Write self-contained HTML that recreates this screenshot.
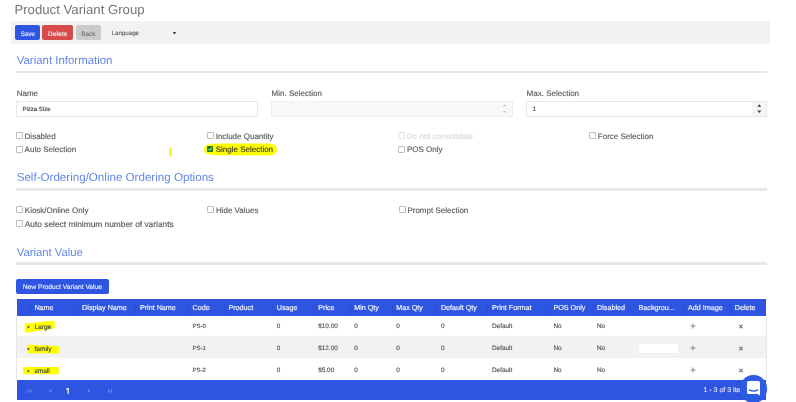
<!DOCTYPE html>
<html><head><meta charset="utf-8"><style>
html,body{margin:0;padding:0;}
body{filter:blur(0.42px);background:#fff;width:796px;height:402px;overflow:hidden;position:relative;}
.t{position:absolute;white-space:nowrap;line-height:1;text-rendering:geometricPrecision;-webkit-text-stroke:0.15px currentColor;font-family:"Liberation Sans", sans-serif;}
.b{position:absolute;}
</style></head><body>
<div class="t" style="left:14.4px;top:2.63px;font-size:13.2px;color:#757575;font-weight:normal;-webkit-text-stroke:0;">Product Variant Group</div>
<div class="b" style="left:11px;top:21.2px;width:759.00px;height:23.10px;background:#f2f2f2;"></div>
<div class="b" style="left:14.9px;top:25.1px;width:25.30px;height:15.00px;background:#2d55e1;border-radius:2px;"></div>
<div class="t" style="left:20.7px;top:31.67px;font-size:6.3px;color:#dfe6ff;font-weight:normal;">Save</div>
<div class="b" style="left:42.3px;top:25.1px;width:30.90px;height:15.00px;background:#d64b4b;border-radius:2px;"></div>
<div class="t" style="left:48.1px;top:31.61px;font-size:6.6px;color:#fbe3e3;font-weight:normal;">Delete</div>
<div class="b" style="left:75.5px;top:25.1px;width:25.50px;height:15.00px;background:#cacbcd;border-radius:2px;"></div>
<div class="t" style="left:81.3px;top:31.78px;font-size:6.4px;color:#7a7a7a;font-weight:normal;">Back</div>
<div class="t" style="left:111.5px;top:30.95px;font-size:6.2px;color:#666;font-weight:normal;">Language</div>
<div class="b" style="left:172.6px;top:32px;width:3.80px;height:2.60px;background:#444;clip-path:polygon(0 0,100% 0,50% 100%);"></div>
<div class="t" style="left:16.7px;top:55.51px;font-size:11.45px;color:#6286e6;font-weight:normal;-webkit-text-stroke:0;">Variant Information</div>
<div class="b" style="left:16.2px;top:70.5px;width:750.80px;height:2.50px;background:#e8e8e8;"></div>
<div class="t" style="left:16.7px;top:90.43px;font-size:8px;color:#5a5a5a;font-weight:normal;">Name</div>
<div class="t" style="left:271.6px;top:90.43px;font-size:8px;color:#5a5a5a;font-weight:normal;">Min. Selection</div>
<div class="t" style="left:526.6px;top:90.43px;font-size:8px;color:#5a5a5a;font-weight:normal;">Max. Selection</div>
<div class="b" style="left:16px;top:101px;width:242.00px;height:16.00px;background:#fff;border:1px solid #e8e8e8;box-sizing:border-box;"></div>
<div class="t" style="left:22.5px;top:107.42px;font-size:6px;color:#444;font-weight:normal;">Pizza Size</div>
<div class="b" style="left:271px;top:101px;width:241.50px;height:16.00px;background:#f8f8f8;border:1px solid #efefef;box-sizing:border-box;"></div>
<div class="b" style="left:502.5px;top:104.2px;width:4.00px;height:2.40px;background:#c8c8c8;clip-path:polygon(50% 0,100% 100%,0 100%);"></div>
<div class="b" style="left:502.5px;top:110.6px;width:4.00px;height:2.40px;background:#c8c8c8;clip-path:polygon(0 0,100% 0,50% 100%);"></div>
<div class="b" style="left:526px;top:101px;width:241.00px;height:16.00px;background:#fff;border:1px solid #e8e8e8;box-sizing:border-box;"></div>
<div class="b" style="left:752px;top:102px;width:14.00px;height:14.00px;background:#f6f6f6;"></div>
<div class="t" style="left:532.5px;top:107.17px;font-size:6.3px;color:#444;font-weight:normal;">1</div>
<div class="b" style="left:757.2px;top:104.2px;width:4.20px;height:2.60px;background:#444;clip-path:polygon(50% 0,100% 100%,0 100%);"></div>
<div class="b" style="left:757.2px;top:110.4px;width:4.20px;height:2.60px;background:#444;clip-path:polygon(0 0,100% 0,50% 100%);"></div>
<svg class="b" style="left:0;top:0;" width="300" height="170"><path d="M204 149.5 C204 145 208 143.6 222 143.6 L266 143.4 C275 143.4 276.8 146 276.8 149.5 C276.8 154 275 155.6 266 155.6 L218 155.2 C207 155 204 153.5 204 149.5 Z" fill="#ffff00"/></svg>
<div class="b" style="left:168.5px;top:148.2px;width:3.50px;height:7.50px;background:#ffff00;border-radius:1px;"></div>
<div class="b" style="left:16px;top:132px;width:7.00px;height:7.00px;background:transparent;border:1px solid #bdbdbd;box-sizing:border-box;border-radius:1px;"></div>
<div class="t" style="left:24.599999999999998px;top:132.53px;font-size:8px;color:#5a5a5a;font-weight:normal;">Disabled</div>
<div class="b" style="left:207px;top:132px;width:7.00px;height:7.00px;background:transparent;border:1px solid #bdbdbd;box-sizing:border-box;border-radius:1px;"></div>
<div class="t" style="left:215.7px;top:132.53px;font-size:8px;color:#5a5a5a;font-weight:normal;">Include Quantity</div>
<div class="b" style="left:398px;top:132px;width:7.00px;height:7.00px;background:transparent;border:1px solid #e0e0e0;box-sizing:border-box;border-radius:1px;"></div>
<div class="t" style="left:406.7px;top:132.53px;font-size:8px;color:#d8d8d8;font-weight:normal;">Do not consolidate</div>
<div class="b" style="left:589px;top:132px;width:7.00px;height:7.00px;background:transparent;border:1px solid #bdbdbd;box-sizing:border-box;border-radius:1px;"></div>
<div class="t" style="left:597.8000000000001px;top:132.53px;font-size:8px;color:#5a5a5a;font-weight:normal;">Force Selection</div>
<div class="b" style="left:16px;top:146px;width:7.00px;height:7.00px;background:transparent;border:1px solid #bdbdbd;box-sizing:border-box;border-radius:1px;"></div>
<div class="t" style="left:24.599999999999998px;top:146.23px;font-size:8px;color:#5a5a5a;font-weight:normal;">Auto Selection</div>
<div class="b" style="left:207px;top:146px;width:6.00px;height:6.00px;background:#1d7a1d;border-radius:1px;"></div>
<svg class="b" style="left:207px;top:146px;" width="6" height="6"><path d="M1.3 3.1 L2.6 4.4 L4.8 1.6" stroke="#e8ffe8" stroke-width="0.9" fill="none"/></svg>
<div class="t" style="left:215.7px;top:146.23px;font-size:8px;color:#3c3c20;font-weight:normal;">Single Selection</div>
<div class="b" style="left:398px;top:146px;width:7.00px;height:7.00px;background:transparent;border:1px solid #bdbdbd;box-sizing:border-box;border-radius:1px;"></div>
<div class="t" style="left:407.0px;top:146.23px;font-size:8px;color:#5a5a5a;font-weight:normal;">POS Only</div>
<div class="t" style="left:16.7px;top:172.18px;font-size:11.6px;color:#6286e6;font-weight:normal;-webkit-text-stroke:0;">Self-Ordering/Online Ordering Options</div>
<div class="b" style="left:16.2px;top:187.7px;width:750.80px;height:3.00px;background:#e8e8e8;"></div>
<div class="b" style="left:16px;top:206px;width:7.00px;height:7.00px;background:transparent;border:1px solid #bdbdbd;box-sizing:border-box;border-radius:1px;"></div>
<div class="t" style="left:24.8px;top:206.53px;font-size:8px;color:#5a5a5a;font-weight:normal;">Kiosk/Online Only</div>
<div class="b" style="left:207px;top:206px;width:7.00px;height:7.00px;background:transparent;border:1px solid #bdbdbd;box-sizing:border-box;border-radius:1px;"></div>
<div class="t" style="left:215.89999999999998px;top:206.53px;font-size:8px;color:#5a5a5a;font-weight:normal;">Hide Values</div>
<div class="b" style="left:399px;top:206px;width:7.00px;height:7.00px;background:transparent;border:1px solid #bdbdbd;box-sizing:border-box;border-radius:1px;"></div>
<div class="t" style="left:407.4px;top:206.53px;font-size:8px;color:#5a5a5a;font-weight:normal;">Prompt Selection</div>
<div class="b" style="left:16px;top:220px;width:7.00px;height:7.00px;background:transparent;border:1px solid #bdbdbd;box-sizing:border-box;border-radius:1px;"></div>
<div class="t" style="left:24.8px;top:219.73px;font-size:8.35px;color:#5a5a5a;font-weight:normal;">Auto select minimum number of variants</div>
<div class="t" style="left:16.7px;top:247.63px;font-size:11.3px;color:#6286e6;font-weight:normal;-webkit-text-stroke:0;">Variant Value</div>
<div class="b" style="left:16.2px;top:261.8px;width:750.80px;height:2.80px;background:#e8e8e8;"></div>
<div class="b" style="left:16px;top:278.8px;width:92.70px;height:15.20px;background:#2d55e1;border-radius:2px;"></div>
<div class="t" style="left:22.7px;top:285.03px;font-size:6.7px;color:#e8ecff;font-weight:normal;">New Product Variant Value</div>
<div class="b" style="left:16.8px;top:299.3px;width:749.70px;height:16.30px;background:#2d55e1;"></div>
<div class="b" style="left:16.8px;top:315.6px;width:749.70px;height:20.60px;background:#fff;"></div>
<div class="b" style="left:16.8px;top:336.2px;width:749.70px;height:22.30px;background:#f2f2f2;"></div>
<div class="b" style="left:16.8px;top:358.5px;width:749.70px;height:21.80px;background:#fff;"></div>
<div class="b" style="left:16.8px;top:380.3px;width:749.70px;height:20.20px;background:#2d55e1;"></div>
<div class="b" style="left:16.3px;top:315.6px;width:0.50px;height:64.70px;background:#e6e6e6;"></div>
<div class="b" style="left:766.0px;top:315.6px;width:0.50px;height:64.70px;background:#e8e8e8;"></div>
<div class="b" style="left:29.7px;top:299.3px;width:1.00px;height:16.30px;background:#2a4ed4;"></div>
<div class="b" style="left:77.4px;top:299.3px;width:1.00px;height:16.30px;background:#2a4ed4;"></div>
<div class="b" style="left:135.2px;top:299.3px;width:1.00px;height:16.30px;background:#2a4ed4;"></div>
<div class="b" style="left:187.9px;top:299.3px;width:1.00px;height:16.30px;background:#2a4ed4;"></div>
<div class="b" style="left:223.7px;top:299.3px;width:1.00px;height:16.30px;background:#2a4ed4;"></div>
<div class="b" style="left:272.1px;top:299.3px;width:1.00px;height:16.30px;background:#2a4ed4;"></div>
<div class="b" style="left:313.5px;top:299.3px;width:1.00px;height:16.30px;background:#2a4ed4;"></div>
<div class="b" style="left:349.5px;top:299.3px;width:1.00px;height:16.30px;background:#2a4ed4;"></div>
<div class="b" style="left:391.5px;top:299.3px;width:1.00px;height:16.30px;background:#2a4ed4;"></div>
<div class="b" style="left:436.2px;top:299.3px;width:1.00px;height:16.30px;background:#2a4ed4;"></div>
<div class="b" style="left:487.3px;top:299.3px;width:1.00px;height:16.30px;background:#2a4ed4;"></div>
<div class="b" style="left:548.7px;top:299.3px;width:1.00px;height:16.30px;background:#2a4ed4;"></div>
<div class="b" style="left:592.3px;top:299.3px;width:1.00px;height:16.30px;background:#2a4ed4;"></div>
<div class="b" style="left:633.8px;top:299.3px;width:1.00px;height:16.30px;background:#2a4ed4;"></div>
<div class="b" style="left:683.2px;top:299.3px;width:1.00px;height:16.30px;background:#2a4ed4;"></div>
<div class="b" style="left:730.0px;top:299.3px;width:1.00px;height:16.30px;background:#2a4ed4;"></div>
<div class="t" style="left:34.4px;top:303.91px;font-size:7.2px;color:#eef1ff;font-weight:normal;-webkit-text-stroke:0.2px #eef1ff;">Name</div>
<div class="t" style="left:82.10000000000001px;top:303.91px;font-size:7.2px;color:#eef1ff;font-weight:normal;-webkit-text-stroke:0.2px #eef1ff;">Display Name</div>
<div class="t" style="left:139.89999999999998px;top:303.91px;font-size:7.2px;color:#eef1ff;font-weight:normal;-webkit-text-stroke:0.2px #eef1ff;">Print Name</div>
<div class="t" style="left:192.6px;top:303.91px;font-size:7.2px;color:#eef1ff;font-weight:normal;-webkit-text-stroke:0.2px #eef1ff;">Code</div>
<div class="t" style="left:228.39999999999998px;top:303.91px;font-size:7.2px;color:#eef1ff;font-weight:normal;-webkit-text-stroke:0.2px #eef1ff;">Product</div>
<div class="t" style="left:276.8px;top:303.91px;font-size:7.2px;color:#eef1ff;font-weight:normal;-webkit-text-stroke:0.2px #eef1ff;">Usage</div>
<div class="t" style="left:318.2px;top:303.91px;font-size:7.2px;color:#eef1ff;font-weight:normal;-webkit-text-stroke:0.2px #eef1ff;">Price</div>
<div class="t" style="left:354.2px;top:303.91px;font-size:7.2px;color:#eef1ff;font-weight:normal;-webkit-text-stroke:0.2px #eef1ff;">Min Qty</div>
<div class="t" style="left:396.2px;top:303.91px;font-size:7.2px;color:#eef1ff;font-weight:normal;-webkit-text-stroke:0.2px #eef1ff;">Max Qty</div>
<div class="t" style="left:440.9px;top:303.91px;font-size:7.2px;color:#eef1ff;font-weight:normal;-webkit-text-stroke:0.2px #eef1ff;">Default Qty</div>
<div class="t" style="left:492.0px;top:303.91px;font-size:7.2px;color:#eef1ff;font-weight:normal;-webkit-text-stroke:0.2px #eef1ff;">Print Format</div>
<div class="t" style="left:553.4000000000001px;top:303.91px;font-size:7.2px;color:#eef1ff;font-weight:normal;-webkit-text-stroke:0.2px #eef1ff;">POS Only</div>
<div class="t" style="left:597.0px;top:303.91px;font-size:7.2px;color:#eef1ff;font-weight:normal;-webkit-text-stroke:0.2px #eef1ff;">Disabled</div>
<div class="t" style="left:638.5px;top:303.91px;font-size:7.2px;color:#eef1ff;font-weight:normal;-webkit-text-stroke:0.2px #eef1ff;">Backgrou...</div>
<div class="t" style="left:687.9000000000001px;top:303.91px;font-size:7.2px;color:#eef1ff;font-weight:normal;-webkit-text-stroke:0.2px #eef1ff;">Add Image</div>
<div class="t" style="left:734.7px;top:303.91px;font-size:7.2px;color:#eef1ff;font-weight:normal;-webkit-text-stroke:0.2px #eef1ff;">Delete</div>
<svg class="b" style="left:0;top:0;" width="80" height="402"><g fill="#ffff00" stroke="#ffff00" stroke-width="1" stroke-linejoin="round"><polygon points="25.2,324 54.1,321 54.1,328 25.2,332.3"/><polygon points="28.1,345.3 58.3,346.6 58.3,353.1 28.1,352.8"/><polygon points="23.7,367.5 58.3,367.5 58.3,373.8 23.7,373.8"/></g></svg>
<svg class="b" style="left:26px;top:324.0px;" width="5" height="6"><path d="M1.6 1.6 L3.8 3 L1.6 4.4 Z" fill="#444"/></svg>
<div class="t" style="left:34.4px;top:324.91px;font-size:6.6px;color:#444;font-weight:normal;">Large</div>
<div class="t" style="left:192.6px;top:324.42px;font-size:6px;color:#555;font-weight:normal;">PS-0</div>
<div class="t" style="left:276.8px;top:324.08px;font-size:6.4px;color:#555;font-weight:normal;">0</div>
<div class="t" style="left:318.2px;top:324.08px;font-size:6.4px;color:#555;font-weight:normal;">$10.00</div>
<div class="t" style="left:354.2px;top:324.08px;font-size:6.4px;color:#555;font-weight:normal;">0</div>
<div class="t" style="left:396.2px;top:324.08px;font-size:6.4px;color:#555;font-weight:normal;">0</div>
<div class="t" style="left:440.9px;top:324.08px;font-size:6.4px;color:#555;font-weight:normal;">0</div>
<div class="t" style="left:492.0px;top:324.08px;font-size:6.4px;color:#555;font-weight:normal;">Default</div>
<div class="t" style="left:553.4000000000001px;top:324.08px;font-size:6.4px;color:#555;font-weight:normal;">No</div>
<div class="t" style="left:597.0px;top:324.08px;font-size:6.4px;color:#555;font-weight:normal;">No</div>
<svg class="b" style="left:689px;top:322px;" width="8" height="8"><path d="M1.5 4 H6.5 M4 1.5 V6.5" stroke="#888" stroke-width="1"/></svg>
<div class="t" style="left:738.8px;top:323.15px;font-size:7.5px;color:#6a6a6a;font-weight:bold;">&#215;</div>
<svg class="b" style="left:26px;top:346.0px;" width="5" height="6"><path d="M1.6 1.6 L3.8 3 L1.6 4.4 Z" fill="#444"/></svg>
<div class="t" style="left:34.4px;top:346.91px;font-size:6.6px;color:#444;font-weight:normal;">family</div>
<div class="t" style="left:192.6px;top:346.42px;font-size:6px;color:#555;font-weight:normal;">PS-1</div>
<div class="t" style="left:276.8px;top:346.08px;font-size:6.4px;color:#555;font-weight:normal;">0</div>
<div class="t" style="left:318.2px;top:346.08px;font-size:6.4px;color:#555;font-weight:normal;">$12.00</div>
<div class="t" style="left:354.2px;top:346.08px;font-size:6.4px;color:#555;font-weight:normal;">0</div>
<div class="t" style="left:396.2px;top:346.08px;font-size:6.4px;color:#555;font-weight:normal;">0</div>
<div class="t" style="left:440.9px;top:346.08px;font-size:6.4px;color:#555;font-weight:normal;">0</div>
<div class="t" style="left:492.0px;top:346.08px;font-size:6.4px;color:#555;font-weight:normal;">Default</div>
<div class="t" style="left:553.4000000000001px;top:346.08px;font-size:6.4px;color:#555;font-weight:normal;">No</div>
<div class="t" style="left:597.0px;top:346.08px;font-size:6.4px;color:#555;font-weight:normal;">No</div>
<svg class="b" style="left:689px;top:344px;" width="8" height="8"><path d="M1.5 4 H6.5 M4 1.5 V6.5" stroke="#888" stroke-width="1"/></svg>
<div class="t" style="left:738.8px;top:345.15px;font-size:7.5px;color:#6a6a6a;font-weight:bold;">&#215;</div>
<svg class="b" style="left:26px;top:367.8px;" width="5" height="6"><path d="M1.6 1.6 L3.8 3 L1.6 4.4 Z" fill="#444"/></svg>
<div class="t" style="left:34.4px;top:368.71px;font-size:6.6px;color:#444;font-weight:normal;">small</div>
<div class="t" style="left:192.6px;top:368.22px;font-size:6px;color:#555;font-weight:normal;">PS-2</div>
<div class="t" style="left:276.8px;top:367.88px;font-size:6.4px;color:#555;font-weight:normal;">0</div>
<div class="t" style="left:318.2px;top:367.88px;font-size:6.4px;color:#555;font-weight:normal;">$5.00</div>
<div class="t" style="left:354.2px;top:367.88px;font-size:6.4px;color:#555;font-weight:normal;">0</div>
<div class="t" style="left:396.2px;top:367.88px;font-size:6.4px;color:#555;font-weight:normal;">0</div>
<div class="t" style="left:440.9px;top:367.88px;font-size:6.4px;color:#555;font-weight:normal;">0</div>
<div class="t" style="left:492.0px;top:367.88px;font-size:6.4px;color:#555;font-weight:normal;">Default</div>
<div class="t" style="left:553.4000000000001px;top:367.88px;font-size:6.4px;color:#555;font-weight:normal;">No</div>
<div class="t" style="left:597.0px;top:367.88px;font-size:6.4px;color:#555;font-weight:normal;">No</div>
<svg class="b" style="left:689px;top:366px;" width="8" height="8"><path d="M1.5 4 H6.5 M4 1.5 V6.5" stroke="#888" stroke-width="1"/></svg>
<div class="t" style="left:738.8px;top:366.95px;font-size:7.5px;color:#6a6a6a;font-weight:bold;">&#215;</div>
<div class="b" style="left:639.4px;top:343.5px;width:38.70px;height:9.20px;background:#fff;"></div>
<svg class="b" style="left:0;top:380px;" width="130" height="22"><g fill="rgba(255,255,255,0.28)"><rect x="27.3" y="9" width="0.9" height="4"/><path d="M31.5 9 V13 L28.6 11 Z"/><path d="M51.5 9 V13 L48.6 11 Z"/><path d="M87.8 9 V13 L90.7 11 Z"/><path d="M108 9 V13 L110.9 11 Z"/><rect x="111.1" y="9" width="0.9" height="4"/></g></svg>
<svg class="b" style="left:60px;top:384px;" width="14" height="14"><path d="M6.2 5.6 L8.2 4.3 V9.9" stroke="#fff" stroke-width="1.15" fill="none" stroke-linejoin="round"/></svg>
<div class="t" style="left:703.5px;top:387.47px;font-size:7px;color:#dfe6ff;font-weight:normal;">1 - 3 of 3 ite</div>
<div class="b" style="left:740.2px;top:374.5px;width:27px;height:28px;border-radius:50%;background:#2d5be3;box-shadow:0 0 2px rgba(0,0,0,0.15);"></div>
<svg class="b" style="left:745px;top:379px;" width="17" height="18" viewBox="0 0 17 18"><path d="M3.5 2 H13.5 Q15 2 15 3.5 V16.6 L12.3 15 H3.5 Q2 15 2 13.5 V3.5 Q2 2 3.5 2 Z" fill="#fff"/><path d="M4.3 10.9 Q8.5 13.2 12.7 10.9" stroke="#2d5be3" stroke-width="1.3" fill="none" stroke-linecap="round"/></svg>
</body></html>
